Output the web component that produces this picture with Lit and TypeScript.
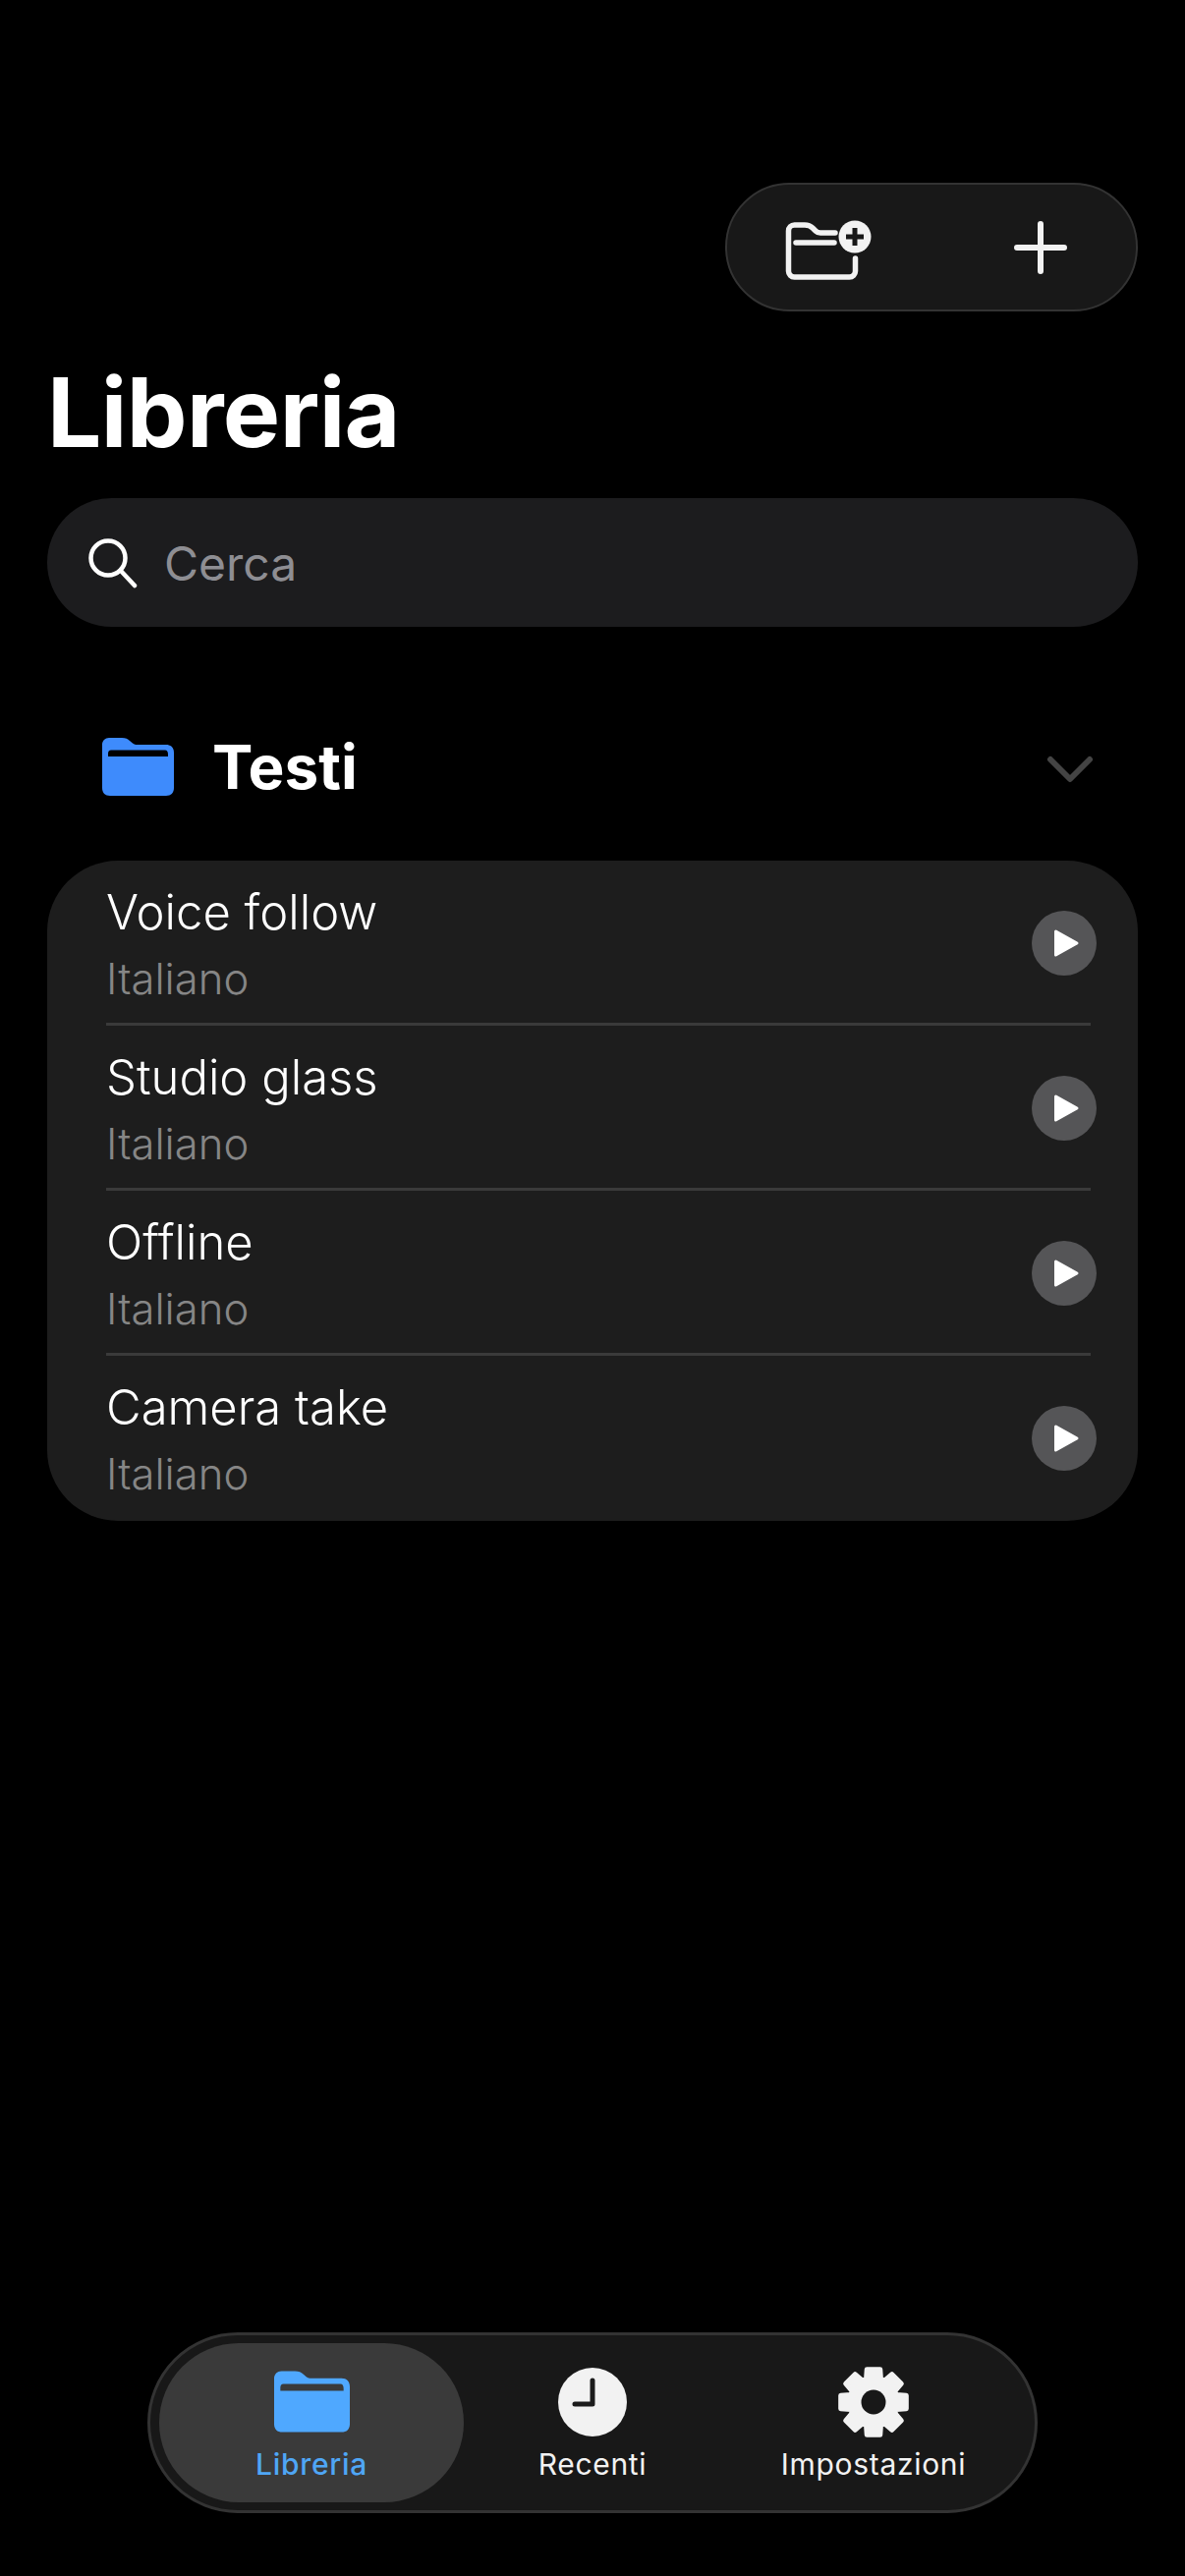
import { LitElement, html, css, svg } from "lit";
import { customElement } from "lit/decorators.js";

const FOLDER =
  "M7 0H20C24 0 26 1 28 3L31 5.5C32.5 6.5 34 7 36 7H65C70 7 73 10 73 15V51C73 56 70 59 65 59H8C3 59 0 56 0 51V7C0 3 3 0 7 0ZM9 12.5C7 12.5 6 14 6 16V19H67V17C67 14 66 12.5 64 12.5Z";

function gearPath(): string {
  const cx = 40, cy = 40, teeth = 8, ro = 34, rb = 24.5;
  const pts: string[] = [];
  for (let i = 0; i < teeth; i++) {
    const a = (i * 2 * Math.PI) / teeth - Math.PI / 2;
    const hw = 0.2, hb = 0.31;
    const p = (r: number, t: number) =>
      `${(cx + r * Math.cos(t)).toFixed(2)} ${(cy + r * Math.sin(t)).toFixed(2)}`;
    pts.push(p(rb, a - hb), p(ro, a - hw), p(ro, a + hw), p(rb, a + hb));
  }
  return "M" + pts.join("L") + "Z";
}

const folderIcon = (cls: string) => html`<svg class=${cls} viewBox="0 0 73 59"><path fill-rule="evenodd" fill="currentColor" d=${FOLDER}></path></svg>`;

@customElement("app-root")
export class AppRoot extends LitElement {
  static styles = css`
    :host { display: block; width: 1206px; height: 2622px; background: #000; color: #fff; font-family: Inter, "Liberation Sans", sans-serif; overflow: hidden; }
    .page { height: 2622px; box-sizing: border-box; padding: 186px 48px 64px; display: flex; flex-direction: column; }
    .actions { align-self: flex-end; width: 420px; height: 131px; box-sizing: border-box; border-radius: 66px; background: #181818; border: 2px solid #333; display: flex; align-items: center; justify-content: space-between; padding: 0 70px 0 60px; }
    .add-folder { width: 90px; height: 59px; margin-top: 8px; overflow: visible; }
    .plus { width: 54px; height: 54px; margin-top: 1px; }
    h1 { margin: 43px 0 27px; font-size: 98px; line-height: 120px; font-weight: 700; letter-spacing: -0.6px; }
    .search { height: 131px; border-radius: 66px; background: #1c1c1e; display: flex; align-items: center; gap: 27px; padding-left: 40px; color: #8e8e93; font-size: 48px; }
    .search svg { width: 52px; height: 52px; }
    .search span { margin-top: 2px; }
    .group { height: 140px; margin-top: 72px; margin-bottom: 26px; display: flex; align-items: center; padding: 0 45px 0 56px; }
    .group-folder { width: 73px; height: 59px; color: #3e8bfc; }
    .group-name { font-size: 62px; line-height: 76px; margin-top: 2px; font-weight: 700; margin-left: 39px; flex: 1; }
    .chev { width: 48px; height: 28px; margin-top: 5px; }
    .card { background: #1d1d1d; border-radius: 72px; overflow: hidden; }
    .row { position: relative; height: 168px; box-sizing: border-box; padding: 0 42px 0 60px; display: flex; align-items: center; justify-content: space-between; }
    .row:not(:last-child)::after { content: ""; position: absolute; left: 60px; right: 48px; bottom: 0; height: 3px; background: #3a3a3a; }
    .title { font-size: 49px; line-height: 60px; margin-top: 2px; font-weight: 350; }
    .sub { font-size: 43.6px; line-height: 52px; margin-top: 12px; color: #868686; font-weight: 350; }
    .play { width: 66px; height: 66px; }
    .nav { margin-top: auto; align-self: center; width: 906px; height: 184px; box-sizing: border-box; border-radius: 92px; background: #181818; border: 3px solid #333; padding: 8px 9px; display: grid; grid-template-columns: 310px 262px 310px; }
    .item { border-radius: 82px; display: flex; flex-direction: column; align-items: center; font-size: 30px; line-height: 36px; letter-spacing: 0.7px; color: #f2f2f2; }
    .item svg { height: 80px; width: 80px; margin-top: 20px; margin-bottom: 5px; }
    .item.on { background: #3a3a3a; color: #4fa6f5; font-weight: 500; }
    .item .nav-folder { width: 77px; height: 63px; margin-top: 28px; margin-bottom: 14px; color: #4fa8ff; }
  `;

  render() {
    const rows = ["Voice follow", "Studio glass", "Offline", "Camera take"];
    return html`<div class="page">
      <div class="actions">
        <svg class="add-folder" viewBox="0 0 90 59" fill="none" stroke="#f2f2f2" stroke-width="5.5" stroke-linecap="round" stroke-linejoin="round">
          <path d="M70.5 37V50A6 6 0 0 1 64.5 56H8.5A6 6 0 0 1 2.500 50V9A6 6 0 0 1 8.500 3H19C23 3 25 4 27 6L30 9C31.500 10.500 33 11 35 11H50"></path>
          <path d="M10 21H49"></path>
          <circle cx="70" cy="15" r="16.500" fill="#f2f2f2" stroke="none"></circle>
          <path d="M61 15H79M70 6V24" stroke="#181818" stroke-width="5" stroke-linecap="butt"></path>
        </svg>
        <svg class="plus" viewBox="0 0 54 54" fill="none" stroke="#f2f2f2" stroke-width="6" stroke-linecap="round"><path d="M3 27H51M27 3V51"></path></svg>
      </div>
      <h1>Libreria</h1>
      <div class="search">
        <svg viewBox="0 0 52 52" fill="none" stroke="#fff" stroke-width="4.500" stroke-linecap="round"><circle cx="22" cy="21" r="17.500"></circle><path d="M35 34L49 49"></path></svg>
        <span>Cerca</span>
      </div>
      <div class="group">
        ${folderIcon("group-folder")}
        <span class="group-name">Testi</span>
        <svg class="chev" viewBox="0 0 48 28" fill="none" stroke="#444" stroke-width="6" stroke-linecap="round" stroke-linejoin="round"><path d="M4 4L24 24L44 4"></path></svg>
      </div>
      <div class="card">
        ${rows.map(r => html`<div class="row">
          <div><div class="title">${r}</div><div class="sub">Italiano</div></div>
          <svg class="play" viewBox="0 0 66 66"><circle cx="33" cy="33" r="33" fill="#555557"></circle><path d="M24.500 21L46 33L24.500 45Z" fill="#fff" stroke="#fff" stroke-width="3" stroke-linejoin="round"></path></svg>
        </div>`)}
      </div>
      <nav class="nav">
        <div class="item on">${folderIcon("nav-folder")}<span>Libreria</span></div>
        <div class="item">
          <svg viewBox="0 0 80 80"><circle cx="40" cy="40" r="35" fill="#f2f2f2"></circle><path d="M40 18V42H22" fill="none" stroke="#1c1c1c" stroke-width="5" stroke-linecap="round" stroke-linejoin="round"></path></svg>
          <span>Recenti</span>
        </div>
        <div class="item">
          <svg viewBox="0 0 80 80">${svg`<path fill-rule="evenodd" fill="#f2f2f2" stroke="#f2f2f2" stroke-width="5" stroke-linejoin="round" d=${gearPath()}></path><circle cx="40" cy="40" r="12.500" fill="#181818"></circle>`}</svg>
          <span>Impostazioni</span>
        </div>
      </nav>
    </div>`;
  }
}
